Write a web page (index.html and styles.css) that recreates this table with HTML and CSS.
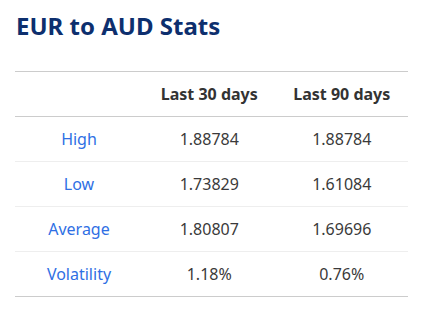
FILE: index.html
```html
<!DOCTYPE html>
<html>
<head>
<meta charset="utf-8">
<link rel="stylesheet" href="styles.css">
</head>
<body>
<div class="stats">
  <h2 class="title">EUR to AUD Stats</h2>
  <table class="tbl">
    <thead>
      <tr><th></th><th>Last 30 days</th><th>Last 90 days</th></tr>
    </thead>
    <tbody>
      <tr><td class="lbl">High</td><td>1.88784</td><td>1.88784</td></tr>
      <tr><td class="lbl">Low</td><td>1.73829</td><td>1.61084</td></tr>
      <tr><td class="lbl">Average</td><td>1.80807</td><td>1.69696</td></tr>
      <tr><td class="lbl">Volatility</td><td>1.18%</td><td>0.76%</td></tr>
    </tbody>
  </table>
</div>
</body>
</html>
```
FILE: styles.css
```css
html, body { margin: 0; padding: 0; background: #fff; }
body { font-family: "Noto Sans", "Open Sans", sans-serif; }
.stats { padding: 9px 21px 0 15px; }
.title {
  margin: 0 0 28px 1px;
  font-size: 24px;
  font-weight: 700;
  color: #0d2f6e;
  line-height: 34px;
}
.tbl {
  width: 100%;
  border-collapse: collapse;
  table-layout: fixed;
  font-size: 16px;
  color: #3a3a3a;
}
.tbl th, .tbl td {
  height: 44px;
  padding: 0;
  text-align: center;
  vertical-align: middle;
}
.tbl th {
  font-weight: 700;
  color: #333;
  border-top: 1px solid #ccc;
  border-bottom: 1px solid #ccc;
}
.tbl th:first-child, .tbl td:first-child { width: 128px; }
.tbl td { border-bottom: 1px solid #eee; }
.tbl tbody tr:last-child td { border-bottom: 1px solid #ccc; }
.tbl .lbl { color: #2f6fe4; }
```
